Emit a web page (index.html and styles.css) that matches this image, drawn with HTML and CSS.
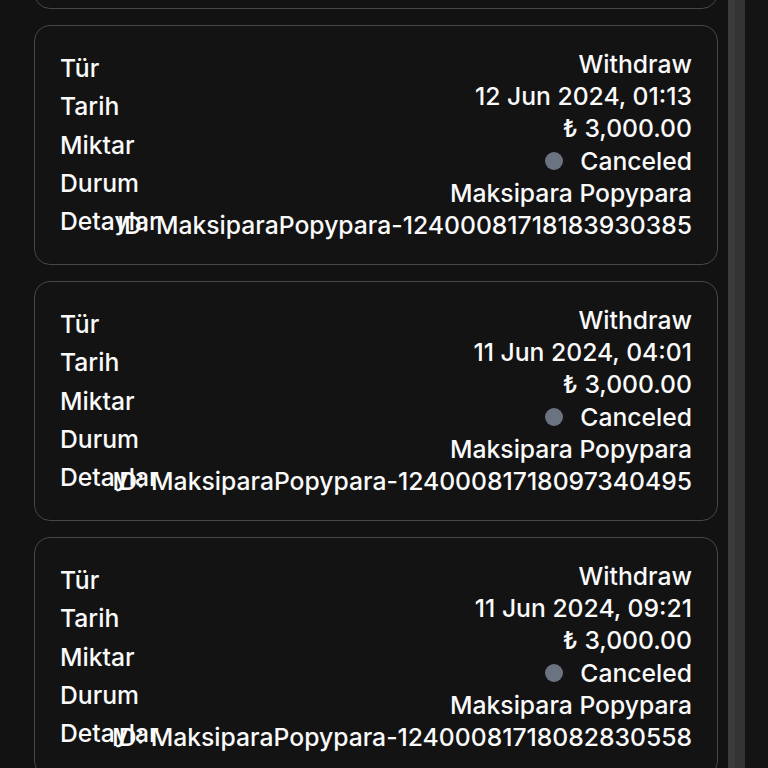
FILE: index.html
```html
<!DOCTYPE html>
<html>
<head>
<meta charset="utf-8">
<link rel="stylesheet" href="styles.css">
</head>
<body>
<div class="page">
  <main class="list">
    <section class="card"></section>
    <section class="card">
      <div class="labels"><div>Tür</div><div>Tarih</div><div>Miktar</div><div>Durum</div><div>Detaylar</div></div>
      <div class="values"><div>Withdraw</div><div>12 Jun 2024, 01:13</div><div>₺ 3,000.00</div><div class="status"><span class="dot"></span>Canceled</div><div>Maksipara Popypara</div><div>ID: MaksiparaPopypara-12400081718183930385</div></div>
    </section>
    <section class="card">
      <div class="labels"><div>Tür</div><div>Tarih</div><div>Miktar</div><div>Durum</div><div>Detaylar</div></div>
      <div class="values"><div>Withdraw</div><div>11 Jun 2024, 04:01</div><div>₺ 3,000.00</div><div class="status"><span class="dot"></span>Canceled</div><div>Maksipara Popypara</div><div>ID: MaksiparaPopypara-12400081718097340495</div></div>
    </section>
    <section class="card">
      <div class="labels"><div>Tür</div><div>Tarih</div><div>Miktar</div><div>Durum</div><div>Detaylar</div></div>
      <div class="values"><div>Withdraw</div><div>11 Jun 2024, 09:21</div><div>₺ 3,000.00</div><div class="status"><span class="dot"></span>Canceled</div><div>Maksipara Popypara</div><div>ID: MaksiparaPopypara-12400081718082830558</div></div>
    </section>
  </main>
  <div class="scrollbar"><div class="thumb"></div></div>
  <div class="edge"></div>
</div>
</body>
</html>
```
FILE: styles.css
```css
html, body {
  margin: 0;
  padding: 0;
  background: #121212;
  height: 768px;
  overflow: hidden;
}
.page {
  display: flex;
  height: 768px;
  font-family: Inter, "Noto Sans", sans-serif;
  color: #fafafa;
}
.list {
  width: 684px;
  padding: 0 10px 0 34px;
  display: flex;
  flex-direction: column;
  gap: 16px;
  margin-top: -231px;
}
.card {
  flex: none;
  box-sizing: border-box;
  height: 240px;
  border: 1px solid #474747;
  border-radius: 16px;
  background: #131313;
  padding: 22px 25px 0 25px;
  display: flex;
  justify-content: space-between;
  font-size: 24.7px;
  font-weight: 500;
}
.labels {
  line-height: 38.3px;
  padding-top: 1px;
  white-space: nowrap;
}
.values {
  line-height: 32.2px;
  text-align: right;
  white-space: nowrap;
  width: 0;
  display: flex;
  flex-direction: column;
  align-items: flex-end;
}
.status {
  display: flex;
  align-items: center;
  gap: 17px;
}
.dot {
  width: 18px;
  height: 18px;
  border-radius: 50%;
  background: #6b7280;
}
.scrollbar {
  width: 17px;
  background: #333333;
  flex: none;
}
.thumb {
  width: 7px;
  height: 100%;
  background: #3b3b3b;
}
.edge {
  flex: 1;
  background: #141414;
}
```
